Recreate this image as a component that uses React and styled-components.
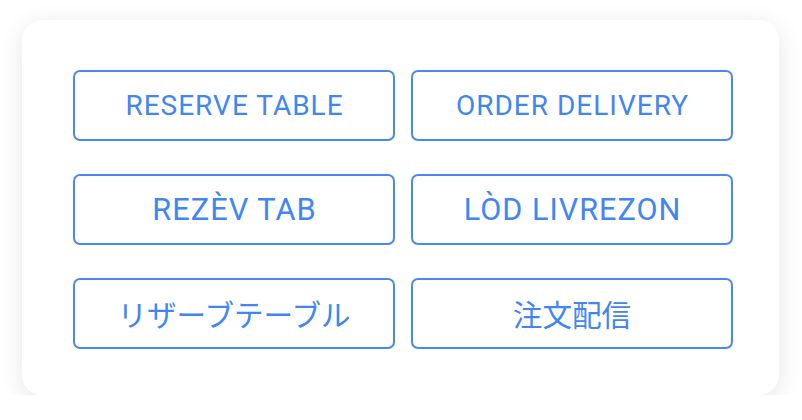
import React from 'react';
import styled, { createGlobalStyle } from 'styled-components';

const GlobalStyle = createGlobalStyle`
  body {
    margin: 0;
    background: #ffffff;
    font-family: Roboto, "Noto Sans CJK JP", sans-serif;
  }
`;

const Page = styled.div`
  padding: 20px 0 0 22px;
`;

const Card = styled.div`
  box-sizing: border-box;
  width: 757px;
  height: 375px;
  padding: 50px 46px 0 51px;
  background: #ffffff;
  border-radius: 20px;
  box-shadow: 0 5px 24px rgba(0, 0, 0, 0.1);
`;

const Grid = styled.div`
  display: grid;
  grid-template-columns: 322px 322px;
  grid-auto-rows: 71px;
  column-gap: 16px;
  row-gap: 33px;
`;

const Button = styled.button`
  box-sizing: border-box;
  display: flex;
  align-items: center;
  justify-content: center;
  margin: 0;
  padding: 0 0 0 ${props => props.cjk ? '0' : '1px'};
  background: #ffffff;
  border: 2px solid #4a89f3;
  border-radius: 7px;
  color: #4285f4;
  font-family: ${props => props.cjk ? '"Noto Sans CJK JP", sans-serif' : 'Roboto, sans-serif'};
  font-size: ${props => props.size};
  font-weight: 400;
  letter-spacing: ${props => props.cjk ? '0' : '1px'};
  cursor: pointer;
`;

const actions = [
  { label: 'RESERVE TABLE', size: '28px' },
  { label: 'ORDER DELIVERY', size: '28px' },
  { label: 'REZÈV TAB', size: '30.8px' },
  { label: 'LÒD LIVREZON', size: '30.6px' },
  { label: 'リザーブテーブル', size: '29.6px', cjk: true },
  { label: '注文配信', size: '29.6px', cjk: true },
];

export default function App() {
  return (
    <Page>
      <GlobalStyle />
      <Card>
        <Grid>
          {actions.map(a => (
            <Button key={a.label} cjk={a.cjk} size={a.size}>{a.label}</Button>
          ))}
        </Grid>
      </Card>
    </Page>
  );
}
